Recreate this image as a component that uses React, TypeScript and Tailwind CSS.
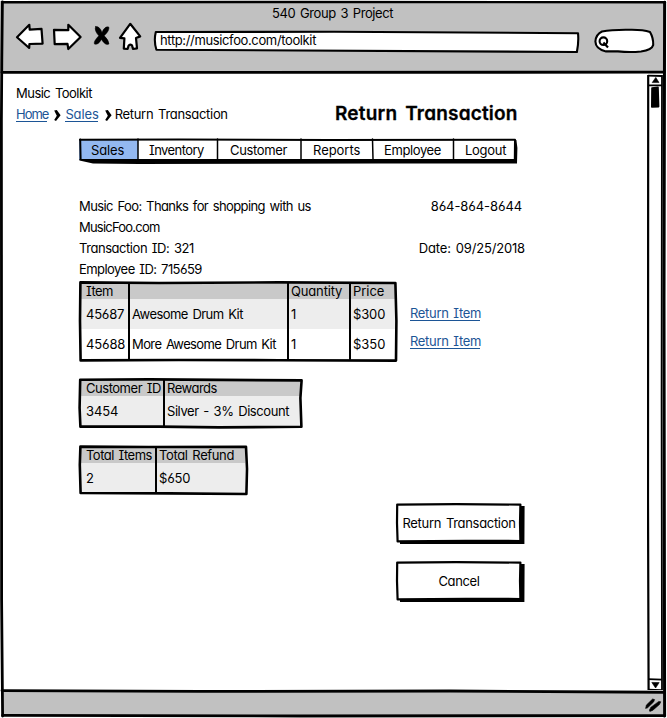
import { useLayoutEffect, useRef, useState } from "react";
import type { ReactNode } from "react";

/** Single-line label whose tracking is adjusted so that it spans `w` pixels. */
function Label({ w, children, className = "" }: { w: number; children: string; className?: string }) {
  const ref = useRef<HTMLSpanElement>(null);
  const [spacing, setSpacing] = useState(0);
  useLayoutEffect(() => {
    const el = ref.current;
    if (!el || children.length < 2) return;
    el.style.letterSpacing = "0px";
    const natural = el.getBoundingClientRect().width;
    const next = (w + 0.4 - natural) / (children.length - 1);
    el.style.letterSpacing = `${next}px`;
    setSpacing(next);
  }, [w, children]);
  return (
    <span
      ref={ref}
      className={`inline-block whitespace-nowrap [word-spacing:1.5px] ${className}`}
      style={{ letterSpacing: `${spacing}px` }}
    >
      {children}
    </span>
  );
}

/** Hand-drawn strokes laid over a box. */
function Ink({ children }: { children: ReactNode }) {
  return (
    <svg className="pointer-events-none absolute left-0 top-0 h-full w-full overflow-visible" fill="none" stroke="#000" strokeLinejoin="round" strokeLinecap="round">
      {children}
    </svg>
  );
}

function Link({ w, children }: { w: number; children: string }) {
  return (
    <a href="#" className="block h-[18px] border-b border-[#1c5596] leading-[21px] text-[#1c5596]">
      <Label w={w} className="-mr-px h-[17px]">{children}</Label>
    </a>
  );
}

function Chevron() {
  return (
    <svg width="7" height="13" viewBox="0 0 7 13" className="mt-[5px]">
      <path d="M0.2 1.6 L2.8 1 L6.6 6.2 L2 12 L0.2 11 L2.8 6.8 Z" fill="#000" />
    </svg>
  );
}

const tabs: { label: string; w: number; cell: string }[] = [
  { label: "Sales", w: 33, cell: "w-[59px] pl-3 bg-[#93b8f0]" },
  { label: "Inventory", w: 55, cell: "w-[80px] pl-[11px]" },
  { label: "Customer", w: 57, cell: "w-[83px] pl-3" },
  { label: "Reports", w: 47, cell: "w-[72px] pl-3" },
  { label: "Employee", w: 57, cell: "w-[81px] pl-[11px]" },
  { label: "Logout", w: 41, cell: "w-[62px] pl-[11px]" },
];

function Toolbar() {
  return (
    <header className="flex h-[72px] flex-col bg-[#c1c1c1]">
      <div className="flex h-[27px] justify-center pl-[2px] leading-[24px]">
        <Label w={121}>540 Group 3 Project</Label>
      </div>
      <div className="flex items-start">
        <svg width="154" height="32" viewBox="0 22 154 32" className="-mt-[6px] shrink-0" fill="#fff" stroke="#000" strokeWidth="2.2" strokeLinejoin="round" strokeLinecap="round">
          <path d="M17 37.2 L29.3 24.8 L29.7 29.6 L41.5 28.8 L42.6 43.6 L29.4 44 L29.2 48 Z" />
          <path d="M54 29.8 L68.3 30.2 L68.3 24.8 L80.6 37 L68.3 49 L67.5 43.8 L54.7 44.2 Z" />
          <path
            d="M95.6 26.6 Q99.6 26 102 32.4 Q104.6 26 108.8 27 Q109.8 30.4 104.2 35.8 Q108.6 39.8 109 44 Q105.6 46 101.4 39.4 Q98 45.4 94.4 44 Q93.4 41.4 98.8 35.8 Q94 30.6 95.6 26.6 Z"
            fill="#000"
            strokeWidth="0.5"
          />
          <path d="M130.2 23.8 L140.2 36.4 L136 38 L137 48.4 L133 49 L132 45.4 Q130 43.8 128.6 45.6 L127.6 49 L123.8 48.6 L124.4 38.4 L120 37.8 Z" />
        </svg>
        <div className="relative mt-[3px] h-[20px] w-[425px] shrink-0">
          <Ink>
            <path d="M1.8 1 L180 0.8 L424 2.2 Q424.9 11 422.9 21 L2.4 18.8 Q-0.4 9.8 1.8 1 Z" fill="#fff" strokeWidth="2.1" />
          </Ink>
          <div className="relative pl-[6px] leading-[19px]">
            <Label w={156}>http://musicfoo.com/toolkit</Label>
          </div>
        </div>
        <svg width="62" height="28" viewBox="594 27 62 28" className="-mt-px ml-[15px] shrink-0" fill="#fff" stroke="#000" strokeWidth="2.1" strokeLinejoin="round">
          <path d="M602 31.5 Q612 29.5 630 29.8 Q643 29.6 650 32 Q653.5 38 653.2 45 Q652 50 641 51.5 Q630 52.6 618 51.4 L606 51.4 Q595.5 49 595.4 41.5 Q595.8 34.5 602 31.5 Z" />
          <circle cx="603.4" cy="41.2" r="3.8" strokeWidth="2.1" />
          <path d="M603.4 42.6 L608 47.4" strokeWidth="2.2" />
        </svg>
      </div>
    </header>
  );
}

function Scrollbar() {
  return (
    <svg width="16" height="617" viewBox="647 73 16 617" className="shrink-0" fill="none" stroke="#000" strokeWidth="1.8">
      <path d="M648.2 75 Q647.6 300 648 500 L648.6 690" strokeWidth="2.2" />
      <path d="M662 75 L661.6 400 L662 690" strokeWidth="1.8" />
      <path d="M648 75.6 L662 76 M648 85.4 L662 85.4 M648 679.2 L662 679.6 M648 689.6 L662 690.2" />
      <path d="M655.8 77.4 L659 82.6 L652.2 82.6 Z" fill="#000" strokeWidth="0.6" />
      <path d="M651.8 682.4 L659.2 682.6 L655.6 688 Z" fill="#000" strokeWidth="0.6" />
      <path d="M652 88 L658 87.4 L658.6 106.6 L651.8 107 Z" fill="#000" strokeWidth="1.6" strokeLinejoin="round" />
    </svg>
  );
}

function Cell({ w, className, children }: { w: number; className: string; children: string }) {
  return (
    <div className={className}>
      <Label w={w}>{children}</Label>
    </div>
  );
}

function ItemsTable() {
  return (
    <div className="relative h-[80px] w-[319px] shrink-0 px-[2px] pt-[3px]">
      <div className="flex h-[15px] bg-[#c9c9c9] leading-[15px]">
        <Cell w={27} className="w-[205px] pl-[5px]">Item</Cell>
        <Cell w={51} className="w-[62px] pl-[5px]">Quantity</Cell>
        <Cell w={31} className="pl-[5px]">Price</Cell>
      </div>
      <div className="flex h-[30px] bg-[#ededed] leading-[30px]">
        <Cell w={38} className="w-[47px] pl-[5px]">45687</Cell>
        <Cell w={111} className="w-[158px] pl-[4px]">Awesome Drum Kit</Cell>
        <Cell w={4} className="w-[62px] pl-[5px]">1</Cell>
        <Cell w={32} className="pl-[5px]">$300</Cell>
      </div>
      <div className="flex h-[30px] bg-white leading-[30px]">
        <Cell w={39} className="w-[47px] pl-[5px]">45688</Cell>
        <Cell w={144} className="w-[158px] pl-[4px]">More Awesome Drum Kit</Cell>
        <Cell w={4} className="w-[62px] pl-[5px]">1</Cell>
        <Cell w={32} className="pl-[5px]">$350</Cell>
      </div>
      <Ink>
        <path d="M1.4 1.4 L80 2 L200 1.4 L316.4 2 L317.4 40 L317 79.6 L200 79.2 L100 79 L1.6 79.4 L1 40 Z" strokeWidth="2.6" />
        <path d="M50 2 L50 78 M209 2 L209 78 M271 2 L271 78" strokeWidth="2" />
      </Ink>
    </div>
  );
}

function CustomerTable() {
  return (
    <div className="relative h-[50px] w-[223px] px-[2px] pt-[3px]">
      <div className="flex h-[15px] bg-[#c9c9c9] leading-[15px]">
        <Cell w={75} className="w-[85px] pl-[5px]">Customer ID</Cell>
        <Cell w={50} className="pl-px">Rewards</Cell>
      </div>
      <div className="flex h-[30px] bg-[#ededed] leading-[30px]">
        <Cell w={32} className="w-[85px] pl-[5px]">3454</Cell>
        <Cell w={122} className="pl-px">Silver - 3% Discount</Cell>
      </div>
      <Ink>
        <path d="M1.2 1.8 L70 1.4 L222.6 2.4 L221.4 20 L222.4 48.8 L140 49.4 L80 48.6 L1.4 48.6 L0.6 30 Z" strokeWidth="2.6" />
        <path d="M85 2 L85 48" strokeWidth="2" />
      </Ink>
    </div>
  );
}

function TotalsTable() {
  return (
    <div className="relative h-[50px] w-[168px] px-[2px] pt-[3px]">
      <div className="flex h-[15px] bg-[#c9c9c9] leading-[15px]">
        <Cell w={66} className="w-[78px] pl-[5px]">Total Items</Cell>
        <Cell w={75} className="">Total Refund</Cell>
      </div>
      <div className="flex h-[30px] bg-[#ededed] leading-[30px]">
        <Cell w={7} className="w-[78px] pl-[5px]">2</Cell>
        <Cell w={31} className="">$650</Cell>
      </div>
      <Ink>
        <path d="M1.4 1.6 L70 2 L167 1.8 L168 24 L167.4 49 L90 48.4 L1.6 48 L0.8 20 Z" strokeWidth="2.6" />
        <path d="M77 2 L77 48" strokeWidth="2" />
      </Ink>
    </div>
  );
}

function SketchButton({ w, children }: { w: number; children: string }) {
  return (
    <button className="relative block h-[40px] w-[128px]">
      <Ink>
        <path d="M4 38 L4 41 L128.4 41 L128.6 3 L124 3 L124 38 Z" fill="#000" stroke="none" />
        <path d="M1.2 1.6 L60 1.2 L124.4 1.6 L124 20 L124.4 38 L70 37.8 L1.6 38.4 L1 20 Z" fill="#fff" strokeWidth="2.2" />
      </Ink>
      <span className="relative block w-[126px] text-center leading-[39px]">
        <Label w={w}>{children}</Label>
      </span>
    </button>
  );
}

export default function App() {
  return (
    <div className="relative flex h-[718px] w-[667px] flex-col overflow-hidden bg-white pb-[3px] pr-[4px] pt-px font-['Inter','Liberation_Sans',sans-serif] text-[13px] text-black [font-feature-settings:'cv11','cv08','cv03']">
      <Toolbar />
      <main className="flex h-[617px] shrink-0 pl-[2px]">
        <div className="flex-1 pl-[13px] pt-[10px]">
          <div className="pl-px leading-[21px]">
            <Label w={76}>Music Toolkit</Label>
          </div>
          <div className="flex h-[21px] leading-[21px]">
            <div className="ml-px flex w-[319px] shrink-0">
              <Link w={33}>Home</Link>
              <span className="ml-[7px] mr-[4px]"><Chevron /></span>
              <Link w={33}>Sales</Link>
              <span className="ml-[7px] mr-[3px]"><Chevron /></span>
              <Label w={113}>Return Transaction</Label>
            </div>
            <h1 className="text-[19px] font-semibold leading-[20px] [-webkit-text-stroke:0.3px_#000]">
              <Label w={182} className="[word-spacing:3px]">Return Transaction</Label>
            </h1>
          </div>
          <nav className="relative ml-[64px] mt-[13px] flex h-[26px] w-[438px] pt-[2px]">
            {tabs.map((t) => (
              <div key={t.label} className={`h-[20px] leading-[21px] ${t.cell}`}>
                <Label w={t.w}>{t.label}</Label>
              </div>
            ))}
            <Ink>
              <path d="M1 1.8 L100 1.4 L250 2 L436 1.8" strokeWidth="2" />
              <path d="M1.2 1.4 L1.6 21" strokeWidth="2" />
              <path d="M0.4 21 L434.8 21 L435 1.6 L437.4 2 L438.4 10 L438 25.6 L300 25.6 L60 26 L14 25.4 L0.4 22.4 Z" fill="#000" stroke="none" />
              <path d="M59 1 L59 21 M138.5 1 L138.5 21 M222 1 L222 21 M293.5 1 L294 21 M374.5 1 L374.5 21" strokeWidth="1.5" />
            </Ink>
          </nav>
          <div className="ml-[64px] mt-[32px] flex w-[446px] justify-between leading-[21px]">
            <div className="flex flex-col items-start">
              <Label w={232}>Music Foo: Thanks for shopping with us</Label>
              <Label w={81}>MusicFoo.com</Label>
              <Label w={115}>Transaction ID: 321</Label>
              <Label w={123}>Employee ID: 715659</Label>
            </div>
            <div className="flex flex-col items-end gap-[21px]">
              <div className="pr-[3px]"><Label w={91}>864-864-8644</Label></div>
              <Label w={106}>Date: 09/25/2018</Label>
            </div>
          </div>
          <div className="ml-[64px] mt-px flex">
            <ItemsTable />
            <div className="ml-[12px] mt-[22px] flex flex-col gap-[10px]">
              <Link w={71}>Return Item</Link>
              <Link w={71}>Return Item</Link>
            </div>
          </div>
          <div className="ml-[64px] mt-[17px]"><CustomerTable /></div>
          <div className="ml-[64px] mt-[17px]"><TotalsTable /></div>
          <div className="ml-[381px] mt-[8px] flex flex-col gap-[18px]">
            <SketchButton w={113}>Return Transaction</SketchButton>
            <SketchButton w={41}>Cancel</SketchButton>
          </div>
        </div>
        <Scrollbar />
      </main>
      <footer className="ml-[2px] flex flex-1 items-start justify-end bg-[#c1c1c1]">
        <svg width="20" height="16" viewBox="643 698 20 16" className="mt-[8px]" fill="#000" stroke="#000" strokeWidth="0.6" strokeLinejoin="round">
          <path d="M645.6 708.4 L646.4 705 L652.6 699 L654.6 699.6 L653.6 702 L647.6 707.8 Z" />
          <path d="M649.4 710 L651 707.2 L658.8 701.4 L660.8 701.8 L659.4 704.6 L652.6 710.4 L649.8 711.4 Z" />
        </svg>
      </footer>
      <Ink>
        <path d="M2.4 2.2 L300 2 L665 2.2" strokeWidth="2.4" />
        <path d="M2.4 2 L1.8 60 L1.4 120 L1.6 600 L2.6 716" strokeWidth="2.8" />
        <path d="M664.6 2.2 L664 300 L664.6 716" strokeWidth="3" />
        <path d="M2.6 715.4 L300 716 L664.6 715.6" strokeWidth="2.8" />
        <path d="M2 72.4 L664 72.2" strokeWidth="2.8" />
        <path d="M2 690.6 L200 691.4 L450 691 L664 692.4" strokeWidth="2.8" />
      </Ink>
    </div>
  );
}
